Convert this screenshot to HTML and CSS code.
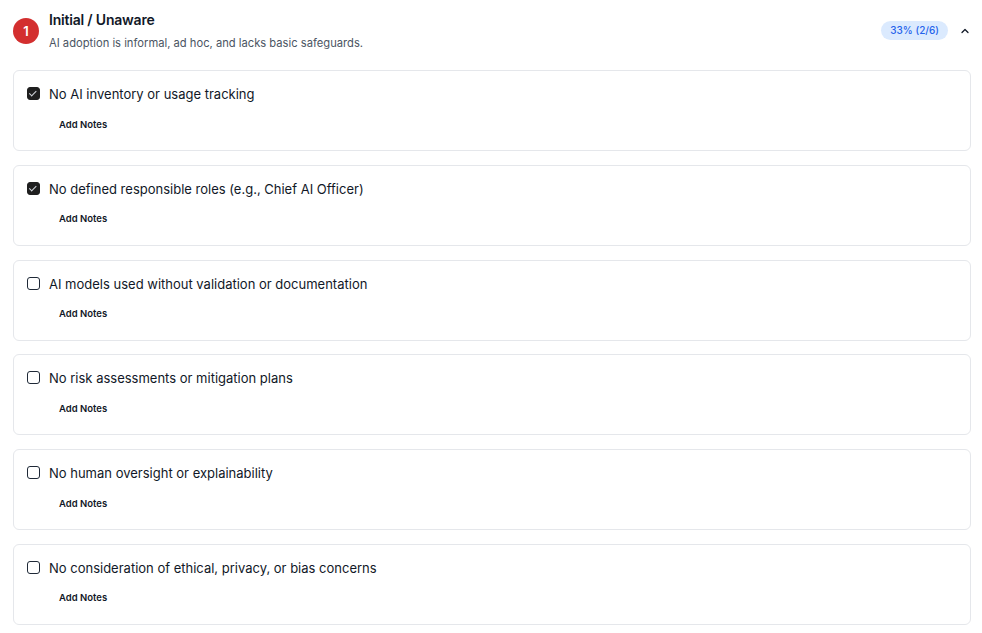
FILE: index.html
```html
<!DOCTYPE html>
<html lang="en">
  <head>
    <meta charset="UTF-8" />
    <meta name="viewport" content="width=device-width, initial-scale=1.0" />
    <title>Maturity Level 1</title>
    <link rel="stylesheet" href="styles.css">
  </head>

  <body>
    <div class="level">
      <div class="level-header">
        <div class="level-number">1</div>
        <div class="level-title">
          <h2>Initial / Unaware</h2>
          <p>AI adoption is informal, ad hoc, and lacks basic safeguards.</p>
        </div>
        <span class="progress">33% (2/6)</span>
        <button class="toggle" aria-label="Collapse">
          <svg width="12" height="12" viewBox="0 0 24 24" fill="none" stroke="currentColor" stroke-width="2.5" stroke-linecap="round" stroke-linejoin="round"><path d="m18 15-6-6-6 6"/></svg>
        </button>
      </div>

      <div class="items">
        <div class="item">
          <label class="item-row"><input type="checkbox" checked /> <span>No AI inventory or usage tracking</span></label>
          <button class="notes">Add Notes</button>
        </div>
        <div class="item">
          <label class="item-row"><input type="checkbox" checked /> <span>No defined responsible roles (e.g., Chief AI Officer)</span></label>
          <button class="notes">Add Notes</button>
        </div>
        <div class="item">
          <label class="item-row"><input type="checkbox" /> <span>AI models used without validation or documentation</span></label>
          <button class="notes">Add Notes</button>
        </div>
        <div class="item">
          <label class="item-row"><input type="checkbox" /> <span>No risk assessments or mitigation plans</span></label>
          <button class="notes">Add Notes</button>
        </div>
        <div class="item">
          <label class="item-row"><input type="checkbox" /> <span>No human oversight or explainability</span></label>
          <button class="notes">Add Notes</button>
        </div>
        <div class="item">
          <label class="item-row"><input type="checkbox" /> <span>No consideration of ethical, privacy, or bias concerns</span></label>
          <button class="notes">Add Notes</button>
        </div>
      </div>
    </div>
  </body>
</html>
```

FILE: styles.css
```css
body {
  font-family: Inter, "Noto Sans", sans-serif;
  margin: 0;
  padding: 0;
  background-color: #fff;
  color: #111827;
}

.level {
  padding: 10px 11px 0 13px;
}

.level-header {
  display: flex;
  align-items: center;
  gap: 10px;
}

.level-number {
  width: 26px;
  height: 26px;
  border-radius: 50%;
  background-color: #d32f2f;
  color: #fff;
  font-size: 13px;
  font-weight: 600;
  display: flex;
  align-items: center;
  justify-content: center;
  flex-shrink: 0;
  margin-top: 1px;
}

.level-title {
  flex: 1;
}

.level-title h2 {
  margin: 0;
  font-size: 14px;
  font-weight: 600;
  line-height: 20px;
  letter-spacing: -0.2px;
}

.level-title p {
  margin: 5px 0 0 0;
  font-size: 11.2px;
  color: #4b5563;
  line-height: 16px;
}

.progress {
  background-color: #dbeafe;
  color: #2563eb;
  font-size: 10px;
  font-weight: 500;
  padding: 3px 9px;
  border-radius: 999px;
  line-height: 13px;
}

.toggle {
  background: none;
  border: none;
  padding: 0;
  width: 12px;
  height: 20px;
  margin-left: 1px;
  display: flex;
  align-items: center;
  justify-content: center;
  color: #111827;
  cursor: pointer;
}

.items {
  margin-top: 19px;
  display: flex;
  flex-direction: column;
  gap: 13.8px;
}

.item {
  border: 1px solid #e5e7eb;
  border-radius: 6px;
  padding: 13px 13px 12px 13px;
}

.item-row {
  display: flex;
  align-items: center;
  gap: 9px;
  font-size: 13px;
  line-height: 20px;
  cursor: pointer;
}

.item-row input {
  appearance: none;
  margin: 0 0 1px 0;
  width: 13px;
  height: 13px;
  border: 1.5px solid #1f2937;
  border-radius: 3px;
  position: relative;
  flex-shrink: 0;
  cursor: pointer;
}

.item-row input:checked {
  background-color: #1f1f1f;
  border-color: #1f1f1f;
}

.item-row input:checked::after {
  content: "";
  position: absolute;
  left: 3.3px;
  top: 1.2px;
  width: 2.6px;
  height: 5.5px;
  border: solid #d1d5db;
  border-width: 0 1.2px 1.2px 0;
  transform: rotate(45deg);
}

.notes {
  margin: 6px 0 0 22px;
  background: none;
  border: none;
  font-family: inherit;
  font-size: 9.5px;
  font-weight: 600;
  color: #111827;
  height: 28px;
  padding: 0 10px;
  border-radius: 4px;
  cursor: pointer;
}

.notes:hover {
  background-color: #f3f4f6;
}
```
